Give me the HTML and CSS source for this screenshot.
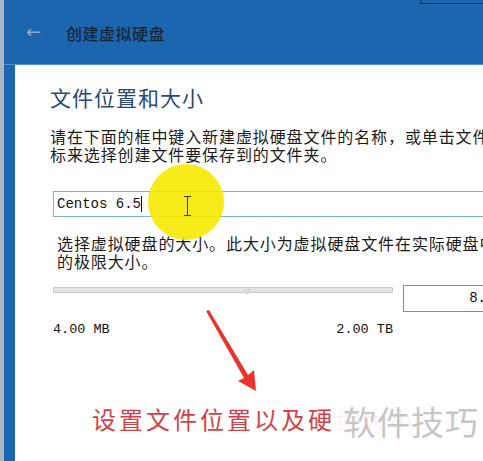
FILE: index.html
```html
<!DOCTYPE html>
<html lang="zh-CN">

<head>
  <meta charset="UTF-8">
  <meta name="viewport" content="width=device-width, initial-scale=1.0">
  <title>创建虚拟硬盘</title>
  <link rel="stylesheet" href="styles.css">
</head>

<body>
  <div class="frame">
    <div class="window">
      <div class="titlebar">
        <span class="back">&#8592;</span>
        <span class="title">创建虚拟硬盘</span>
      </div>
      <div class="tipbox"></div>

      <div class="content">
        <h1 class="heading">文件位置和大小</h1>
        <p class="desc">请在下面的框中键入新建虚拟硬盘文件的名称，或单击文件<br>标来选择创建文件要保存到的文件夹。</p>

        <div class="field">
          <span class="value">Centos 6.5</span><span class="caret"></span>
        </div>

        <p class="desc desc-size">选择虚拟硬盘的大小。此大小为虚拟硬盘文件在实际硬盘中<br>的极限大小。</p>

        <div class="size-row">
          <div class="slider">
            <div class="track"></div>
            <div class="thumb"></div>
          </div>
          <div class="size-box">8.00 GB</div>
        </div>

        <div class="limits">
          <span>4.00 MB</span>
          <span>2.00 TB</span>
        </div>

        <div class="note">设置文件位置以及硬盘大小</div>

        <!-- video annotations -->
        <div class="spot"></div>
        <div class="ibeam"></div>
        <svg class="arrow" width="70" height="90" viewBox="0 0 70 90">
          <polygon points="2,2 5,1 44,66 50,61 52,82 34,72 40,69" fill="#e8342c" />
        </svg>
      </div>
    </div>
  </div>

  <div class="watermark">软件技巧</div>
</body>

</html>
```

FILE: styles.css
```css
html,
body {
  margin: 0;
  padding: 0;
  height: 100%;
}

body {
  background-color: #a9b7c6;
  overflow: hidden;
  font-family: "Noto Sans CJK SC", "Noto Sans", sans-serif;
  position: relative;
}

.frame {
  height: 100%;
  padding-left: 4px;
}

.window {
  height: 100%;
  width: 600px;
  background-color: #1b66ae;
  position: relative;
  display: flex;
  flex-direction: column;
}

.titlebar {
  height: 64px;
  display: flex;
  align-items: center;
  padding-left: 22px;
  border-bottom: 1px solid #5a91c8;
}

.titlebar .back {
  color: #8fa9c4;
  font-size: 18px;
  font-family: "DejaVu Sans", sans-serif;
  width: 40px;
  margin-top: -2px;
}

.titlebar .title {
  color: #17263a;
  font-size: 16px;
  font-weight: 500;
  letter-spacing: 0.5px;
  margin-top: 2px;
}

.tipbox {
  position: absolute;
  top: -4px;
  left: 416px;
  width: 200px;
  height: 7px;
  border: 1px solid #0d3360;
  border-top: 0;
}

.content {
  flex: 1;
  background-color: #fff;
  margin-left: 11px;
  padding: 19px 0 0 35px;
  position: relative;
}

.heading {
  margin: 0;
  font-size: 21px;
  line-height: 26px;
  font-weight: normal;
  color: #2b4a74;
  letter-spacing: 1px;
}

.desc {
  margin: 17px 0 0;
  font-size: 16px;
  line-height: 18px;
  letter-spacing: 0.9px;
  color: #1b1b1b;
  white-space: nowrap;
}

.desc-size {
  margin-left: 7px;
}

.field {
  margin: 28px 0 0 3px;
  height: 24px;
  border: 1px solid #86aecf;
  display: flex;
  align-items: center;
  padding-left: 3px;
  font-family: "Liberation Mono", monospace;
  font-size: 14px;
  color: #111;
}

.caret {
  display: inline-block;
  width: 1px;
  height: 16px;
  background-color: #111;
}

.size-row {
  margin: 15px 0 0 3px;
  display: flex;
  align-items: flex-start;
}

.slider {
  width: 340px;
  position: relative;
  height: 10px;
}

.track {
  margin-top: 2px;
  height: 4px;
  background-color: #e4e4e4;
  border: 1px solid #c9c9c9;
  border-radius: 1px;
}

.thumb {
  position: absolute;
  left: 191px;
  top: 4px;
  width: 6px;
  height: 5px;
  background-color: #d7d7d7;
  border-radius: 0 0 3px 3px;
}

.size-box {
  margin-left: 10px;
  width: 124px;
  height: 25px;
  border: 1px solid #8a8a8a;
  font-family: "Liberation Mono", monospace;
  font-size: 14px;
  line-height: 25px;
  text-align: right;
  padding-right: 9px;
  color: #111;
}

.limits {
  margin: 10px 0 0 3px;
  width: 340px;
  display: flex;
  justify-content: space-between;
  font-family: "Liberation Mono", monospace;
  font-size: 13.5px;
  line-height: 16px;
  color: #111;
}

.note {
  margin: 66px 0 0 42px;
  font-size: 24px;
  line-height: 30px;
  letter-spacing: 3px;
  color: #cf4249;
  white-space: nowrap;
}

.spot {
  position: absolute;
  left: 133px;
  top: 99px;
  width: 76px;
  height: 76px;
  border-radius: 50%;
  background-color: rgba(246, 234, 0, 0.9);
}

.ibeam {
  position: absolute;
  left: 172px;
  top: 131px;
  width: 1px;
  height: 20px;
  background-color: #3a3a20;
}

.ibeam::before,
.ibeam::after {
  content: '';
  position: absolute;
  left: -3px;
  width: 7px;
  height: 1px;
  background-color: #3a3a20;
}

.ibeam::before {
  top: 0;
}

.ibeam::after {
  bottom: 0;
}

.arrow {
  position: absolute;
  left: 189px;
  top: 244px;
}

.watermark {
  position: absolute;
  left: 335px;
  top: 386px;
  width: 148px;
  height: 75px;
  background-color: rgba(255, 255, 255, 0.93);
  color: #c6c6c6;
  font-size: 33px;
  line-height: 70px;
  letter-spacing: 1px;
  padding-left: 8px;
  box-sizing: border-box;
  white-space: nowrap;
}
```
